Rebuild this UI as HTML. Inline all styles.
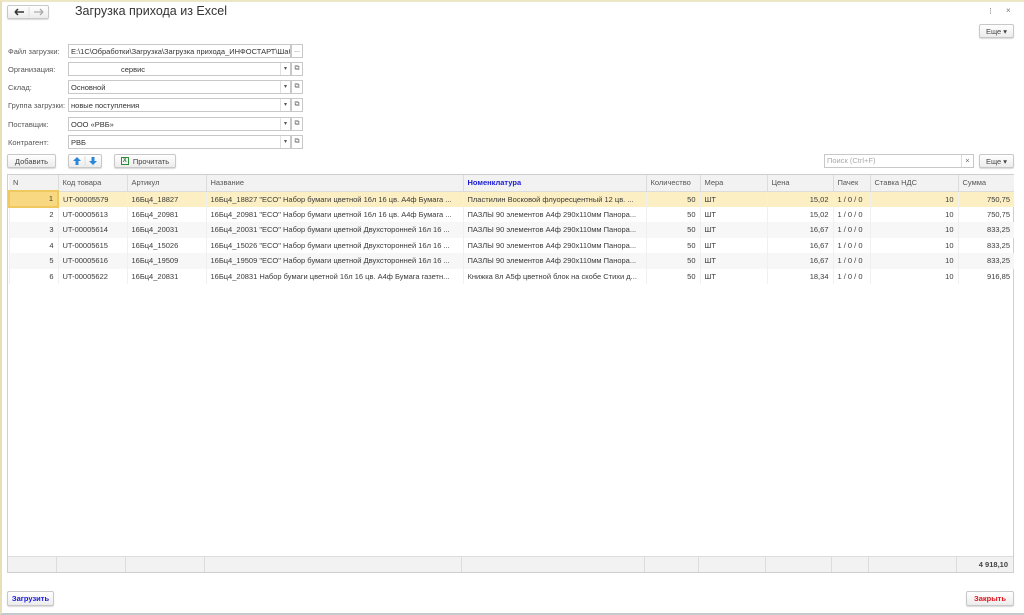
<!DOCTYPE html>
<html><head><meta charset="utf-8"><style>
*{box-sizing:border-box;margin:0;padding:0}
body{width:1024px;height:615px;overflow:hidden;background:#fff;font-family:"Liberation Sans",Arial,sans-serif;font-size:8px;color:#4d4d4d;position:relative}
.a{position:absolute}
.frame{left:0;top:0;width:1024px;height:615px;border-left:2px solid #e6dfb8;border-top:2px solid #ece6c4;border-bottom:2px solid #c4c9ce}
.btn{position:absolute;border:1px solid #c8c8c8;border-radius:2px;background:linear-gradient(#fff,#ececec);box-shadow:0 1px 1px rgba(0,0,0,.15);font-size:7.5px;color:#444;display:flex;align-items:center;justify-content:center}
.lbl{position:absolute;left:8px;font-size:7.5px;color:#555}
.inp{position:absolute;left:68px;width:223px;height:14px;border:1px solid #c8c8c8;background:#fff;font-size:7.5px;line-height:13px;padding-left:2px;color:#333;white-space:nowrap;overflow:hidden}
.dd{position:absolute;right:0;top:0;width:10px;height:12px;border-left:1px solid #e0e0e0;font-size:6px;text-align:center;color:#555}
.sb{position:absolute;left:291px;width:12px;height:14px;border:1px solid #c8c8c8;background:#fff;font-size:7px;text-align:center;line-height:12px;color:#666}
table{position:absolute;left:8px;top:175px;border-collapse:collapse;table-layout:fixed;width:1005px}
td{height:15.5px;font-size:7.5px;padding:0 4px;white-space:nowrap;overflow:hidden;text-overflow:ellipsis;color:#3a3a3a;border-left:1px solid #f0f0f0}
th{height:16px;font-size:7.5px;font-weight:normal;text-align:left;padding:0 4px;background:#f2f2f2;color:#555;border-left:1px solid #dcdcdc;border-bottom:1px solid #dcdcdc}
tr.even td{background:#f7f7f7}
tr.sel td{background:#fbefc3}
.r{text-align:right}
</style></head><body>
<div class="a frame"></div>
<div class="btn" style="left:7px;top:5px;width:42px;height:14px;padding:0"><svg width="40" height="12" viewBox="0 0 40 12"><path d="M7 6h9M7 6l3-3M7 6l3 3" stroke="#333" stroke-width="1.5" fill="none"/><line x1="21" y1="1" x2="21" y2="11" stroke="#ddd"/><path d="M26 6h9M35 6l-3-3M35 6l-3 3" stroke="#aaa" stroke-width="1.3" fill="none"/></svg></div>
<div class="a" style="left:75px;top:4px;font-size:12.5px;color:#333">Загрузка прихода из Excel</div>
<div class="a" style="left:989px;top:6px;font-size:9px;color:#777">⁝</div>
<div class="a" style="left:1006px;top:6px;font-size:8px;color:#777">×</div>
<div class="btn" style="left:979px;top:24px;width:35px;height:14px">Еще ▾</div>

<div class="lbl" style="top:47px">Файл загрузки:</div>
<div class="inp" style="top:44px">E:\1С\Обработки\Загрузка\Загрузка прихода_ИНФОСТАРТ\Шаб</div><div class="sb" style="top:44px">...</div>
<div class="lbl" style="top:65px">Организация:</div>
<div class="inp" style="top:62px"><span style="padding-left:50px">сервис</span><div class="dd">▾</div></div><div class="sb" style="top:62px">⧉</div>
<div class="lbl" style="top:83px">Склад:</div>
<div class="inp" style="top:80px">Основной<div class="dd">▾</div></div><div class="sb" style="top:80px">⧉</div>
<div class="lbl" style="top:101px">Группа загрузки:</div>
<div class="inp" style="top:98px">новые поступления<div class="dd">▾</div></div><div class="sb" style="top:98px">⧉</div>
<div class="lbl" style="top:120px">Поставщик:</div>
<div class="inp" style="top:117px">ООО «РВБ»<div class="dd">▾</div></div><div class="sb" style="top:117px">⧉</div>
<div class="lbl" style="top:138px">Контрагент:</div>
<div class="inp" style="top:135px">РВБ<div class="dd">▾</div></div><div class="sb" style="top:135px">⧉</div>

<div class="btn" style="left:7px;top:154px;width:49px;height:14px">Добавить</div>
<div class="btn" style="left:68px;top:154px;width:34px;height:14px;padding:0"><svg width="32" height="12" viewBox="0 0 32 12"><path d="M8 2l-4 4h2.5v4h3V6H12z" fill="#2a86d6"/><line x1="16" y1="1" x2="16" y2="11" stroke="#ddd"/><path d="M24 10l-4-4h2.5V2h3v4H28z" fill="#2a86d6"/></svg></div>
<div class="btn" style="left:114px;top:154px;width:62px;height:14px"><span style="display:inline-block;width:8px;height:8px;border:1px solid #2e8b3c;color:#2e8b3c;font-size:6px;line-height:6px;text-align:center;font-weight:bold;margin-right:4px">X</span>Прочитать</div>
<div class="a" style="left:824px;top:154px;width:150px;height:14px;border:1px solid #c8c8c8;font-size:7.5px;color:#aaa;padding-left:2px;line-height:12px">Поиск (Ctrl+F)<span style="position:absolute;right:0;top:0;width:12px;height:12px;border-left:1px solid #ddd;text-align:center;color:#666">×</span></div>
<div class="btn" style="left:979px;top:154px;width:35px;height:14px">Еще ▾</div>

<div class="a" style="left:7px;top:174px;width:1007px;height:399px;border:1px solid #cfcfcf"></div>
<table>
<colgroup><col style="width:49px"><col style="width:69px"><col style="width:79px"><col style="width:257px"><col style="width:183px"><col style="width:54px"><col style="width:67px"><col style="width:66px"><col style="width:37px"><col style="width:88px"><col style="width:56px"></colgroup>
<tr><th style="border-left:none">N</th><th>Код товара</th><th>Артикул</th><th>Название</th><th style="color:#1a1ad6;font-weight:bold">Номенклатура</th><th>Количество</th><th>Мера</th><th>Цена</th><th>Пачек</th><th>Ставка НДС</th><th>Сумма</th></tr>
<tr class="sel"><td class="r" style="border:2px solid #f0c860;background:#f8d982">1</td><td>UT-00005579</td><td>16Бц4_18827</td><td>16Бц4_18827 "ECO" Набор бумаги цветной 16л 16 цв. А4ф Бумага ...</td><td>Пластилин Восковой флуоресцентный 12 цв. ...</td><td class="r">50</td><td>ШТ</td><td class="r">15,02</td><td>1 / 0 / 0</td><td class="r">10</td><td class="r">750,75</td></tr>
<tr><td class="r">2</td><td>UT-00005613</td><td>16Бц4_20981</td><td>16Бц4_20981 "ECO" Набор бумаги цветной 16л 16 цв. А4ф Бумага ...</td><td>ПАЗЛЫ 90 элементов А4ф 290x110мм Панора...</td><td class="r">50</td><td>ШТ</td><td class="r">15,02</td><td>1 / 0 / 0</td><td class="r">10</td><td class="r">750,75</td></tr>
<tr class="even"><td class="r">3</td><td>UT-00005614</td><td>16Бц4_20031</td><td>16Бц4_20031 "ECO" Набор бумаги цветной Двухсторонней 16л 16 ...</td><td>ПАЗЛЫ 90 элементов А4ф 290x110мм Панора...</td><td class="r">50</td><td>ШТ</td><td class="r">16,67</td><td>1 / 0 / 0</td><td class="r">10</td><td class="r">833,25</td></tr>
<tr><td class="r">4</td><td>UT-00005615</td><td>16Бц4_15026</td><td>16Бц4_15026 "ECO" Набор бумаги цветной Двухсторонней 16л 16 ...</td><td>ПАЗЛЫ 90 элементов А4ф 290x110мм Панора...</td><td class="r">50</td><td>ШТ</td><td class="r">16,67</td><td>1 / 0 / 0</td><td class="r">10</td><td class="r">833,25</td></tr>
<tr class="even"><td class="r">5</td><td>UT-00005616</td><td>16Бц4_19509</td><td>16Бц4_19509 "ECO" Набор бумаги цветной Двухсторонней 16л 16 ...</td><td>ПАЗЛЫ 90 элементов А4ф 290x110мм Панора...</td><td class="r">50</td><td>ШТ</td><td class="r">16,67</td><td>1 / 0 / 0</td><td class="r">10</td><td class="r">833,25</td></tr>
<tr><td class="r">6</td><td>UT-00005622</td><td>16Бц4_20831</td><td>16Бц4_20831 Набор бумаги цветной 16л 16 цв. А4ф Бумага газетн...</td><td>Книжка 8л А5ф цветной блок на скобе Стихи д...</td><td class="r">50</td><td>ШТ</td><td class="r">18,34</td><td>1 / 0 / 0</td><td class="r">10</td><td class="r">916,85</td></tr>
</table>
<div class="a" style="left:8px;top:556px;width:1005px;height:16px;background:#f2f2f2;border-top:1px solid #dcdcdc;display:flex">
<div style="width:49px;border-right:1px solid #dcdcdc"></div><div style="width:69px;border-right:1px solid #dcdcdc"></div><div style="width:79px;border-right:1px solid #dcdcdc"></div><div style="width:257px;border-right:1px solid #dcdcdc"></div><div style="width:183px;border-right:1px solid #dcdcdc"></div><div style="width:54px;border-right:1px solid #dcdcdc"></div><div style="width:67px;border-right:1px solid #dcdcdc"></div><div style="width:66px;border-right:1px solid #dcdcdc"></div><div style="width:37px;border-right:1px solid #dcdcdc"></div><div style="width:88px;border-right:1px solid #dcdcdc"></div><div style="flex:1;text-align:right;padding-right:5px;line-height:15px;font-weight:bold;color:#444;font-size:7.5px">4 918,10</div></div>

<div class="btn" style="left:7px;top:591px;width:47px;height:15px;color:#1a1ad6;font-weight:bold">Загрузить</div>
<div class="btn" style="left:966px;top:591px;width:48px;height:15px;color:#e0141e;font-weight:bold">Закрыть</div>
</body></html>
